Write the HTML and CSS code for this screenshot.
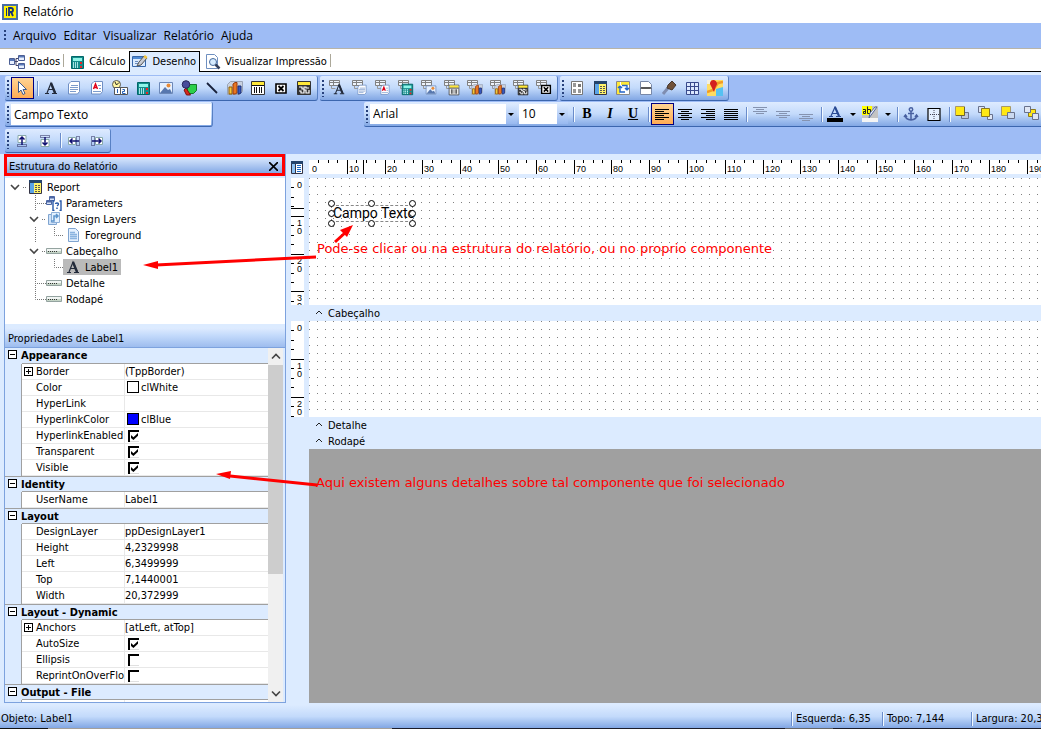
FILE: index.html
```html
<!DOCTYPE html>
<html lang="pt-BR">
<head>
<meta charset="utf-8">
<title>Relatório</title>
<link rel="stylesheet" href="styles.css">
</head>
<body>
<svg class="sprite" aria-hidden="true">
  <symbol id="cursor" viewBox="0 0 16 16"><path d="M4.500 1.500v11l2.500-2.500 2 4.500 2-1-2-4h3.500z" fill="#fff" stroke="#3c5a8c"/></symbol>
  <symbol id="text" viewBox="0 0 16 16"><path d="M2 13.500h4M9 13.500h5M4 13L8 3l4.500 10M5 9.500h5" fill="none" stroke="#222a3a" stroke-width="1.200"/><path d="M8 3l4 10" stroke="#222a3a" stroke-width="2.400"/></symbol>
  <symbol id="memo" viewBox="0 0 16 16"><path d="M5 1.500h8.500v10l-2 2.500H2.500V4z" fill="#fff" stroke="#6f8fc4"/><path d="M5 5.500h7M4 7.500h8M4 9.500h8M4 11.500h6" stroke="#7d9ccc"/></symbol>
  <symbol id="rich" viewBox="0 0 16 16"><path d="M5 1.500h8.500v10l-2 2.500H2.500V4z" fill="#fff" stroke="#6f8fc4"/><path d="M4.500 9L6.500 4l2 5M5 7.500h3" fill="none" stroke="#e00018" stroke-width="1.400"/><path d="M9 5.500h3M10 8.500h2M4 11.500h8" stroke="#7d9ccc"/></symbol>
  <symbol id="sysvar" viewBox="0 0 16 16"><circle cx="4.500" cy="4.500" r="4" fill="#fff6a0" stroke="#555"/><path d="M3 2l1.500 3L7 2.500" fill="none" stroke="#222"/><path d="M2.500 7.500h6v7h-6zM8.500 7.500h7v7h-7z" fill="#fff" stroke="#555"/><path d="M5.500 9v4M10.500 9.500h2v2h-2v2h3" fill="none" stroke="#2460b8"/></symbol>
  <symbol id="calc" viewBox="0 0 16 16"><path d="M2.500 2.500h12v12h-12z" fill="#168c8c" stroke="#006868"/><path d="M4 4h9v3H4z" fill="#8ff5e8"/><path d="M4 9h6M4 11h6M4 13h6" stroke="#d8ffff" stroke-dasharray="1 1" stroke-width="1.500"/><path d="M11 9h2M11 13h2" stroke="#e22" stroke-width="2"/></symbol>
  <symbol id="image" viewBox="0 0 16 16"><path d="M1.500 2.500h13v11h-13z" fill="#e6f1ff" stroke="#6c88b8"/><circle cx="10.500" cy="5.500" r="2" fill="#e88b38"/><path d="M2 13l5-6 3 3 2-1 2 4z" fill="#5777ae"/></symbol>
  <symbol id="shape" viewBox="0 0 16 16"><path d="M6.500 4.500h9v6l-3 3h-6z" fill="#2bd04b" stroke="#14772b"/><path d="M5 8l4.500 7h-4L3 10z" fill="#d7281c" stroke="#7d130c"/><circle cx="5" cy="4.500" r="3.800" fill="#474c9b" stroke="#28285c"/></symbol>
  <symbol id="line" viewBox="0 0 16 16"><path d="M3 3l10 10" stroke="#18203a" stroke-width="1.800"/></symbol>
  <symbol id="chart" viewBox="0 0 16 16"><path d="M.5 4.500l3-3h12v10l-3 3H.5z" fill="#c9d2e0" stroke="#99a3b5"/><path d="M2 7h3v7H2z" fill="#f6c63a" stroke="#8c5c08"/><path d="M6 4l2-1.500h2V13l-2 1H6z" fill="#e87722" stroke="#9a3a08"/><path d="M11 6h3v7l-2 1h-1z" fill="#3658c0" stroke="#1b2e74"/></symbol>
  <symbol id="barcode" viewBox="0 0 16 16"><path d="M1.500 1.500h13v13h-13z" fill="#fff" stroke="#333"/><path d="M2 2h12v3H2z" fill="#ffe838"/><path d="M2 5.500h12M4.500 7v6M6.500 7v6M9.500 7v6M11.500 7v6" stroke="#111"/></symbol>
  <symbol id="check" viewBox="0 0 16 16"><path d="M3 4h10v9H3z" fill="#fff" stroke="#000" stroke-width="1.600"/><path d="M5.500 6l5 5M10.500 6l-5 5" stroke="#000" stroke-width="1.800"/></symbol>
  <symbol id="barcode2d" viewBox="0 0 16 16"><path d="M1.500 1.500h13v13h-13z" fill="#333" stroke="#333"/><path d="M2 2h12v3H2z" fill="#ffe838"/><path d="M3 7h3v2h2V7h2v1h3M3 11h2v2h3v-3h2v3h3v-3" fill="none" stroke="#fff" stroke-width="1.200"/></symbol>
  <symbol id="dbgrid" viewBox="0 0 16 16"><path d="M.5 .5h10v5H.5zM.5 2.500h10M4.500.5v5" fill="#eef4fc" stroke="#808080"/><path d="M2.500 5.500v3h4" fill="none" stroke="#999"/></symbol>
  <symbol id="region" viewBox="0 0 16 16"><path d="M2.500 1.500h11v13h-11z" fill="#fff" stroke="#777"/><path d="M4 4h3M4 6h3M4 10h3M4 12h3M9 10h3M9 12h3" stroke="#333" stroke-width="1.200"/><path d="M9 4h3v3H9z" fill="#777"/></symbol>
  <symbol id="report" viewBox="0 0 16 16"><path d="M2.500 1.500h12v13h-12z" fill="#fff" stroke="#334"/><path d="M2 1h13v3H2z" fill="#24446c"/><path d="M3 4h4v10H3z" fill="#5ba4e8"/><path d="M7 4h7v10H7z" fill="#fff36a"/><path d="M8 6.500h2M8 8.500h2M8 10.500h2M8 12.500h2M11 6.500h2M11 8.500h2M11 10.500h2M11 12.500h2" stroke="#555"/></symbol>
  <symbol id="crosstab" viewBox="0 0 16 16"><path d="M1.500 1.500h13v13h-13z" fill="#fff" stroke="#888"/><path d="M2 2h3v12H2zM6 2h8v3H6z" fill="#ffe838"/><path d="M7 5.500h5v5M12 10l-2-2M12 10l2-2M5 7v5h5M5 6L3 8M5 6l2 2" fill="none" stroke="#2464c8" stroke-width="1.400"/></symbol>
  <symbol id="pagebreak" viewBox="0 0 16 16"><path d="M2.500 1.500h8l3 3v10h-11z" fill="#fff" stroke="#7888a8"/><path d="M3 9l1-2 1 2 1-2 1 2 1-2 1 2 1-2 1 2 1-2 1 2" fill="none" stroke="#333"/></symbol>
  <symbol id="brush" viewBox="0 0 16 16"><path d="M7 8L2 14" stroke="#7f8db0" stroke-width="3"/><path d="M7 5l4-4 4 4-4 5-5-2z" fill="#70523a" stroke="#47392f"/></symbol>
  <symbol id="table" viewBox="0 0 16 16"><path d="M2.500 2.500h12v12h-12zM2.500 6.500h12M2.500 10.500h12M6.500 2.500v12M10.500 2.500v12" fill="#dbe8ff" stroke="#394a8c"/></symbol>
  <symbol id="map" viewBox="0 0 16 16"><path d="M0 0h16v16H0z" fill="#ffdc61"/><path d="M9 16V9l7-2v9z" fill="#55c1f2"/><path d="M0 12l6-2 5-7 5-1" stroke="#f39b25" stroke-width="2.500" fill="none"/><path d="M0 0h4v4H0z" fill="#f4f1df"/><path d="M3 4a3.500 3.500 0 1 1 6 2L7 12 4 6z" fill="#d3201f"/></symbol>
  <symbol id="al" viewBox="0 0 16 16"><path d="M1 3.500h14M1 5.500h9M1 7.500h14M1 9.500h9M1 11.500h14M1 13.500h9" stroke="#000"/></symbol>
  <symbol id="ac" viewBox="0 0 16 16"><path d="M1 3.500h14M4 5.500h8M1 7.500h14M4 9.500h8M1 11.500h14M4 13.500h8" stroke="#000"/></symbol>
  <symbol id="ar" viewBox="0 0 16 16"><path d="M1 3.500h14M6 5.500h9M1 7.500h14M6 9.500h9M1 11.500h14M6 13.500h9" stroke="#000"/></symbol>
  <symbol id="aj" viewBox="0 0 16 16"><path d="M1 3.500h14M1 5.500h14M1 7.500h14M1 9.500h14M1 11.500h14M1 13.500h14" stroke="#000"/></symbol>
  <symbol id="vt" viewBox="0 0 16 16"><path d="M1 1.500h14M4 3.500h8M1 5.500h14M4 7.500h8" stroke="#8593b0"/></symbol>
  <symbol id="vm" viewBox="0 0 16 16"><path d="M1 5.500h14M4 7.500h8M1 9.500h14M4 11.500h8" stroke="#8593b0"/></symbol>
  <symbol id="vb" viewBox="0 0 16 16"><path d="M1 8.500h14M4 10.500h8M1 12.500h14M4 14.500h8" stroke="#8593b0"/></symbol>
  <symbol id="fontcolor" viewBox="0 0 16 16"><path d="M2 10.500h4M9 10.500h5M4 10L8 1l4 9M5 7.500h5" fill="none" stroke="#2a4a94" stroke-width="1.200"/><path d="M8 1l4 9" stroke="#2a4a94" stroke-width="2"/><path d="M0 12h16v4H0z"/></symbol>
  <symbol id="highlight" viewBox="0 0 16 16"><path d="M0 0h16v12H0z" fill="#c3c3c3"/><path d="M0 0h10v9H0z" fill="#ff0"/><path d="M0 12h16v4H0z" fill="#f4f4f4"/><path d="M1 3.500h2.500v4H1.500v-2h2M5.500.5v7h3v-4h-3" fill="none" stroke="#222"/><path d="M15 1L7 12l1-5 5-6z" fill="#eef" stroke="#536a9b"/></symbol>
  <symbol id="anchor" viewBox="0 0 16 16"><circle cx="8" cy="3.500" r="1.700" fill="none" stroke="#4860a0" stroke-width="1.500"/><path d="M8 5v9M5 7.500h6M2.500 9.500q0 4 5.500 4.500 5.500-.5 5.500-4.500M1 11l1.500-2L4 11M12 11l1.500-2L15 11" fill="none" stroke="#4860a0" stroke-width="1.500"/></symbol>
  <symbol id="border" viewBox="0 0 16 16"><path d="M2 2.500h12v12H2z" fill="#e3efff" stroke="#000" stroke-width="1.200"/><path d="M8 4v10M4 8.500h9" stroke="#445" stroke-dasharray="1 1"/></symbol>
  <symbol id="front" viewBox="0 0 16 16"><path d="M6.500 6.500h7v6h-7z" fill="#bcc6dc" stroke="#68718c"/><path d="M.5 .5h9v9h-9z" fill="#ffe814" stroke="#a89868"/><path d="M1 9.500h8.500V1" fill="none" stroke="#6d6230"/></symbol>
  <symbol id="forward" viewBox="0 0 16 16"><path d="M.5 .5h6v6h-6zM9.500 8.500h5v5h-5z" fill="#dfe6f4" stroke="#68718c"/><path d="M3.500 2.500h8v8h-8z" fill="#ffe814" stroke="#8c7820"/></symbol>
  <symbol id="back" viewBox="0 0 16 16"><path d="M.5 .5h9v9h-9z" fill="#ffe814" stroke="#a89868"/><path d="M6.500 6.500h7v6h-7z" fill="#cbd9f0" stroke="#68718c"/></symbol>
  <symbol id="backward" viewBox="0 0 16 16"><path d="M4.500 3.500h7v7h-7z" fill="#ffe814" stroke="#8c7820"/><path d="M.5 .5h6v6h-6zM8.500 7.500h6v6h-6z" fill="#dfe6f4" stroke="#68718c"/></symbol>
  <symbol id="up" viewBox="0 0 16 16"><path d="M4 2.500h8v7H4z" fill="#fff" stroke="#8aa"/><path d="M3.500 11.500h9v2h-9z" fill="none" stroke="#225" stroke-dasharray="1 1"/><path d="M8 4v8M5.500 6.500L8 4l2.500 2.500" fill="none" stroke="#101070" stroke-width="1.500"/></symbol>
  <symbol id="down" viewBox="0 0 16 16"><path d="M4 6.500h8v7H4z" fill="#fff" stroke="#8aa"/><path d="M3.500 2.500h9v2h-9z" fill="none" stroke="#225" stroke-dasharray="1 1"/><path d="M8 4v8M5.500 9.500L8 12l2.500-2.500" fill="none" stroke="#101070" stroke-width="1.500"/></symbol>
  <symbol id="left" viewBox="0 0 16 16"><path d="M2.500 4.500h7v7h-7z" fill="#fff" stroke="#8aa"/><path d="M10.500 3.500h3v9h-3z" fill="none" stroke="#225" stroke-dasharray="1 1"/><path d="M4 8h9M6.500 5.500L4 8l2.500 2.500" fill="none" stroke="#101070" stroke-width="1.500"/></symbol>
  <symbol id="right" viewBox="0 0 16 16"><path d="M6.500 4.500h7v7h-7z" fill="#fff" stroke="#8aa"/><path d="M2.500 3.500h3v9h-3z" fill="none" stroke="#225" stroke-dasharray="1 1"/><path d="M3 8h9M9.500 5.500L12 8l-2.500 2.500" fill="none" stroke="#101070" stroke-width="1.500"/></symbol>
  <symbol id="data" viewBox="0 0 16 16"><path d="M5 7.500h4M9 4.500H7v7h2" fill="none" stroke="#446"/><path d="M.5 4.500h5v6h-5zM9.500 1.500h6v5h-6zM9.500 9.500h6v5h-6z" fill="#e8f0ff" stroke="#4c5f94"/><path d="M1 5h4v2H1zM10 2h5v1.500h-5zM10 10h5v1.500h-5z" fill="#5878b8"/></symbol>
  <symbol id="design" viewBox="0 0 16 16"><path d="M.5 2.500h13v10H.5z" fill="#dcecff" stroke="#3767aa"/><path d="M1 3h12v2H1z" fill="#4f8ad4"/><path d="M3 9.500h5M3 7.500h3" stroke="#6a8cc0"/><path d="M12 2l3 2-6 7-4 1 2-4z" fill="#c9ccd2" stroke="#555"/><path d="M13 1l2.500 2-1.500 2-2.500-2z" fill="#f4c53c"/></symbol>
  <symbol id="preview" viewBox="0 0 16 16"><path d="M1.500.5h8l3 3v11h-11z" fill="#fff" stroke="#6e8fc0"/><circle cx="8" cy="8" r="3.500" fill="#d5ebff" stroke="#456a9c"/><path d="M10.500 10.500l4 4" stroke="#33405c" stroke-width="2.500"/></symbol>
  <symbol id="params" viewBox="0 0 16 16"><path d="M3.500 1.500h5v4h-5zM.5 5.500h5v4h-5z" fill="#d8e4f8" stroke="#4c66a4"/><path d="M4 2h4v1.500H4zM1 6h4v1.500H1z" fill="#4c66a4"/><path d="M8.500 6H7v9.500h1.500M13.500 6H15v9.500h-1.500M9.500 9q0-1 1.500-1t1.500 1-1.500 2M11 12.500V14" fill="none" stroke="#2456a8" stroke-width="1.400"/></symbol>
  <symbol id="layers" viewBox="0 0 16 16"><path d="M2.500 3.500h8v10h-8z" fill="#cfe2f8" stroke="#7fa4d0"/><path d="M5.500 1.500h8v10h-8z" fill="#e4f1ff" stroke="#8fb0d8"/><path d="M5 10h3V5h4M10 3l2 2-2 2" fill="none" stroke="#5c94cc" stroke-width="1.500"/></symbol>
  <symbol id="layer" viewBox="0 0 16 16"><path d="M3.500 1.500h7l3 3v10h-10z" fill="#e4f1ff" stroke="#7fa4d0"/><path d="M5 5.500h5M5 7.500h7M5 9.500h7M5 11.500h7" stroke="#8ab4e0" stroke-width="1.400"/></symbol>
  <symbol id="band" viewBox="0 0 16 16"><path d="M.5 5.500h15v5H.5z" fill="#c4d4c6" stroke="#94a3a0"/><path d="M1 6h14v2H1z" fill="#f1f5f3"/><path d="M2 8.500h9" stroke="#333" stroke-dasharray="1 1"/></symbol>
  <symbol id="gear" viewBox="2 0 16 16"><path d="M2.500 1.500h11v12h-11z" fill="#fff" stroke="#334"/><path d="M2 1h12v3H2z" fill="#24446c"/><path d="M3 4h3v9H3z" fill="#8cc2f4"/><path d="M6.500 4v9" stroke="#334"/><path d="M8 5.500h4M8 7.500h4M8 9.500h4M8 11.500h4" stroke="#1868c8"/></symbol>
  <symbol id="chev" viewBox="0 0 10 10"><path d="M1 3l4 4 4-4" fill="none" stroke="#444" stroke-width="1.600"/></symbol>
</svg>

<div class="window">
  <header class="titlebar">
    <svg width="16" height="16" viewBox="0 0 16 16"><path d="M0 0h16v16H0z" fill="#4a6ea5"/><path d="M2 2h12v12H2z" fill="#fff200"/><path d="M7 12V4h2q2 0 2 2t-2 2H8M9 8l2 4" fill="none" stroke="#10307c" stroke-width="1.800"/><path d="M4.500 4v8" stroke="#10307c"/></svg>
    <span>Relatório</span>
  </header>

  <nav class="menubar">
    <i class="grip"></i>
    <button>Arquivo</button><button>Editar</button><button>Visualizar</button><button>Relatório</button><button>Ajuda</button>
  </nav>

  <div class="tabs" role="tablist">
    <button role="tab" class="tab"><svg class="ic"><use href="#data"/></svg>Dados</button>
    <button role="tab" class="tab"><svg class="ic"><use href="#calc"/></svg>Cálculo</button>
    <button role="tab" class="tab active" aria-selected="true"><svg class="ic"><use href="#design"/></svg>Desenho</button>
    <button role="tab" class="tab"><svg class="ic"><use href="#preview"/></svg>Visualizar Impressão</button>
  </div>

  <div class="dock">
    <div class="dock-row">
      <div class="toolbar">
        <i class="grip"></i>
        <button class="tool on" aria-label="Selecionar"><svg class="ic"><use href="#cursor"/></svg></button>
        <i class="sep"></i>
        <button class="tool" aria-label="Texto"><svg class="ic"><use href="#text"/></svg></button>
        <button class="tool" aria-label="Memo"><svg class="ic"><use href="#memo"/></svg></button>
        <button class="tool" aria-label="Texto rico"><svg class="ic"><use href="#rich"/></svg></button>
        <button class="tool" aria-label="Variável de sistema"><svg class="ic"><use href="#sysvar"/></svg></button>
        <button class="tool" aria-label="Variável"><svg class="ic"><use href="#calc"/></svg></button>
        <button class="tool" aria-label="Imagem"><svg class="ic"><use href="#image"/></svg></button>
        <button class="tool" aria-label="Forma"><svg class="ic"><use href="#shape"/></svg></button>
        <button class="tool" aria-label="Linha"><svg class="ic"><use href="#line"/></svg></button>
        <button class="tool" aria-label="Gráfico"><svg class="ic"><use href="#chart"/></svg></button>
        <button class="tool" aria-label="Código de barras"><svg class="ic"><use href="#barcode"/></svg></button>
        <button class="tool" aria-label="Caixa de seleção"><svg class="ic"><use href="#check"/></svg></button>
        <button class="tool" aria-label="Código 2D"><svg class="ic"><use href="#barcode2d"/></svg></button>
      </div>
      <div class="toolbar">
        <i class="grip"></i>
        <button class="tool" aria-label="DB Texto"><svg class="ic"><use href="#dbgrid"/><use href="#text" x="3" y="2" width="14" height="14"/></svg></button>
        <button class="tool" aria-label="DB Memo"><svg class="ic"><use href="#dbgrid"/><use href="#memo" x="4" y="4" width="12" height="12"/></svg></button>
        <button class="tool" aria-label="DB Texto rico"><svg class="ic"><use href="#dbgrid"/><use href="#rich" x="4" y="4" width="12" height="12"/></svg></button>
        <button class="tool" aria-label="DB Cálculo"><svg class="ic"><use href="#dbgrid"/><use href="#calc" x="2" y="2" width="14" height="14"/></svg></button>
        <button class="tool" aria-label="DB Imagem"><svg class="ic"><use href="#dbgrid"/><use href="#image" x="4" y="4" width="12" height="12"/></svg></button>
        <button class="tool" aria-label="DB Código de barras"><svg class="ic"><use href="#dbgrid"/><use href="#barcode" x="4" y="4" width="12" height="12"/></svg></button>
        <button class="tool" aria-label="DB Gráfico"><svg class="ic"><use href="#dbgrid"/><use href="#chart" x="4" y="3" width="12" height="13"/></svg></button>
        <button class="tool" aria-label="DB Tee Chart"><svg class="ic"><use href="#dbgrid"/><use href="#chart" x="4" y="3" width="12" height="13"/></svg></button>
        <button class="tool" aria-label="DB Código 2D"><svg class="ic"><use href="#dbgrid"/><use href="#barcode2d" x="4" y="4" width="12" height="12"/></svg></button>
        <button class="tool" aria-label="DB Caixa de seleção"><svg class="ic"><use href="#dbgrid"/><use href="#check" x="3" y="2" width="14" height="14"/></svg></button>
      </div>
      <div class="toolbar">
        <i class="grip"></i>
        <button class="tool" aria-label="Região"><svg class="ic"><use href="#region"/></svg></button>
        <button class="tool" aria-label="Sub-relatório"><svg class="ic"><use href="#report"/></svg></button>
        <button class="tool" aria-label="Tabela cruzada"><svg class="ic"><use href="#crosstab"/></svg></button>
        <button class="tool" aria-label="Quebra de página"><svg class="ic"><use href="#pagebreak"/></svg></button>
        <button class="tool" aria-label="Pincel"><svg class="ic"><use href="#brush"/></svg></button>
        <button class="tool" aria-label="Grade"><svg class="ic"><use href="#table"/></svg></button>
        <button class="tool" aria-label="Mapa"><svg class="ic"><use href="#map"/></svg></button>
      </div>
    </div>
    <div class="dock-row spread">
      <div class="toolbar edit-bar">
        <i class="grip"></i>
        <input class="caption" type="text" value="Campo Texto" aria-label="Texto do componente">
      </div>
      <div class="toolbar format-bar">
        <i class="grip"></i>
        <span class="combo font"><select aria-label="Fonte"><option>Arial</option></select></span>
        <span class="combo size"><select aria-label="Tamanho"><option>10</option></select></span>
        <i class="sep"></i>
        <button class="tool glyph bold">B</button>
        <button class="tool glyph italic">I</button>
        <button class="tool glyph under">U</button>
        <i class="sep"></i>
        <button class="tool on" aria-label="Esquerda"><svg class="ic"><use href="#al"/></svg></button>
        <button class="tool" aria-label="Centro"><svg class="ic"><use href="#ac"/></svg></button>
        <button class="tool" aria-label="Direita"><svg class="ic"><use href="#ar"/></svg></button>
        <button class="tool" aria-label="Justificado"><svg class="ic"><use href="#aj"/></svg></button>
        <i class="sep"></i>
        <button class="tool" aria-label="Acima"><svg class="ic"><use href="#vt"/></svg></button>
        <button class="tool" aria-label="Meio"><svg class="ic"><use href="#vm"/></svg></button>
        <button class="tool" aria-label="Abaixo"><svg class="ic"><use href="#vb"/></svg></button>
        <i class="sep"></i>
        <button class="tool" aria-label="Cor da fonte"><svg class="ic"><use href="#fontcolor"/></svg></button>
        <button class="drop" aria-label="Cores da fonte"></button>
        <button class="tool" aria-label="Realce"><svg class="ic"><use href="#highlight"/></svg></button>
        <button class="drop" aria-label="Cores de realce"></button>
        <i class="sep"></i>
        <button class="tool" aria-label="Âncora"><svg class="ic"><use href="#anchor"/></svg></button>
        <button class="tool" aria-label="Borda"><svg class="ic"><use href="#border"/></svg></button>
        <i class="sep"></i>
        <button class="tool" aria-label="Trazer para frente"><svg class="ic"><use href="#front"/></svg></button>
        <button class="tool" aria-label="Avançar"><svg class="ic"><use href="#forward"/></svg></button>
        <button class="tool" aria-label="Enviar para trás"><svg class="ic"><use href="#back"/></svg></button>
        <button class="tool" aria-label="Recuar"><svg class="ic"><use href="#backward"/></svg></button>
      </div>
    </div>
    <div class="dock-row">
      <div class="toolbar nudge-bar">
        <i class="grip"></i>
        <button class="tool" aria-label="Mover acima"><svg class="ic"><use href="#up"/></svg></button>
        <button class="tool" aria-label="Mover abaixo"><svg class="ic"><use href="#down"/></svg></button>
        <i class="sep"></i>
        <button class="tool" aria-label="Mover à esquerda"><svg class="ic"><use href="#left"/></svg></button>
        <button class="tool" aria-label="Mover à direita"><svg class="ic"><use href="#right"/></svg></button>
      </div>
    </div>
  </div>

  <main class="work">
    <aside class="side">
      <div class="pane-title marked"><h2>Estrutura do Relatório</h2><button class="close" aria-label="Fechar"><svg width="9" height="9" viewBox="0 0 9 9"><path d="M0 0l9 9M9 0l-9 9" stroke="#000" stroke-width="1.600"/></svg></button></div>
      <ul class="tree">
        <li><svg class="twig" width="22" height="16"><use href="#chev" x="5" y="3" width="10" height="10"/><path d="M18 8.500h4"/></svg><svg class="ic"><use href="#report"/></svg><span>Report</span></li>
        <li><svg class="twig" width="41" height="16"><path d="M30.500 0v16M32 8.500h9"/></svg><svg class="ic"><use href="#params"/></svg><span>Parameters</span></li>
        <li><svg class="twig" width="41" height="16"><use href="#chev" x="24" y="3" width="10" height="10"/><path d="M37 8.500h4"/></svg><svg class="ic"><use href="#layers"/></svg><span>Design Layers</span></li>
        <li><svg class="twig" width="58" height="16"><path d="M30.500 0v16M49.500 0v8.500h9"/></svg><span class="node"><svg class="ic"><use href="#layer"/></svg><span>Foreground</span></span></li>
        <li><svg class="twig" width="41" height="16"><use href="#chev" x="24" y="3" width="10" height="10"/><path d="M37 8.500h4"/></svg><svg class="ic"><use href="#band"/></svg><span>Cabeçalho</span></li>
        <li><svg class="twig" width="58" height="16"><path d="M30.500 0v16M49.500 0v8.500h9"/></svg><span class="node picked"><svg class="ic"><use href="#text"/></svg><span>Label1</span></span></li>
        <li><svg class="twig" width="41" height="16"><path d="M30.500 0v16M32 8.500h9"/></svg><svg class="ic"><use href="#band"/></svg><span>Detalhe</span></li>
        <li><svg class="twig" width="41" height="16"><path d="M30.500 0v8.500h11"/></svg><svg class="ic"><use href="#band"/></svg><span>Rodapé</span></li>
      </ul>
      <div class="pane-title props-title"><h2>Propriedades de Label1</h2></div>
      <div class="props">
        <div class="props-view">
        <table class="grid">
          <colgroup><col class="c-gutter"><col class="c-name"><col class="c-value"></colgroup>
          <tr class="cat"><th colspan="3"><i class="box minus"></i>Appearance</th></tr>
          <tr><td></td><th><i class="box plus"></i>Border</th><td>(TppBorder)</td></tr>
          <tr><td></td><th>Color</th><td><i class="swatch white"></i>clWhite</td></tr>
          <tr><td></td><th>HyperLink</th><td></td></tr>
          <tr><td></td><th>HyperlinkColor</th><td><i class="swatch blue"></i>clBlue</td></tr>
          <tr><td></td><th><label for="p1">HyperlinkEnabled</label></th><td><input id="p1" type="checkbox" checked></td></tr>
          <tr><td></td><th><label for="p2">Transparent</label></th><td><input id="p2" type="checkbox" checked></td></tr>
          <tr><td></td><th><label for="p3">Visible</label></th><td><input id="p3" type="checkbox" checked></td></tr>
          <tr class="cat"><th colspan="3"><i class="box minus"></i>Identity</th></tr>
          <tr><td></td><th>UserName</th><td>Label1</td></tr>
          <tr class="cat"><th colspan="3"><i class="box minus"></i>Layout</th></tr>
          <tr><td></td><th>DesignLayer</th><td>ppDesignLayer1</td></tr>
          <tr><td></td><th>Height</th><td>4,2329998</td></tr>
          <tr><td></td><th>Left</th><td>6,3499999</td></tr>
          <tr><td></td><th>Top</th><td>7,1440001</td></tr>
          <tr><td></td><th>Width</th><td>20,372999</td></tr>
          <tr class="cat"><th colspan="3"><i class="box minus"></i>Layout - Dynamic</th></tr>
          <tr><td></td><th><i class="box plus"></i>Anchors</th><td>[atLeft, atTop]</td></tr>
          <tr><td></td><th><label for="p4">AutoSize</label></th><td><input id="p4" type="checkbox" checked></td></tr>
          <tr><td></td><th><label for="p5">Ellipsis</label></th><td><input id="p5" type="checkbox"></td></tr>
          <tr><td></td><th><label for="p6">ReprintOnOverFlo</label></th><td><input id="p6" type="checkbox"></td></tr>
          <tr class="cat"><th colspan="3"><i class="box minus"></i>Output - File</th></tr>
          <tr><td></td><th></th><td></td></tr>
        </table>
        </div>
        <div class="scroll">
          <svg class="arrow up" viewBox="0 0 10 10"><use href="#chev"/></svg>
          <i class="thumb"></i><i class="track"></i>
          <svg class="arrow" viewBox="0 0 10 10"><use href="#chev"/></svg>
        </div>
      </div>
    </aside>

    <section class="designer">
      <div class="ruler-line">
        <svg class="ic corner"><use href="#gear"/></svg>
        <svg class="hruler" id="hruler"></svg>
      </div>
      <div class="band-row first">
        <svg class="vruler" data-mark="30"></svg>
        <div class="paper">
          <div class="component">Campo Texto
            <i class="h tl"></i><i class="h tc"></i><i class="h tr"></i><i class="h ml"></i><i class="h mr"></i><i class="h bl"></i><i class="h bc"></i><i class="h br"></i>
          </div>
        </div>
      </div>
      <div class="band-name"><svg viewBox="0 0 8 8"><path d="M1 5l3-3 3 3"/></svg>Cabeçalho</div>
      <div class="band-row second">
        <svg class="vruler"></svg>
        <div class="paper"></div>
      </div>
      <div class="band-name"><svg viewBox="0 0 8 8"><path d="M1 5l3-3 3 3"/></svg>Detalhe</div>
      <div class="band-name"><svg viewBox="0 0 8 8"><path d="M1 5l3-3 3 3"/></svg>Rodapé</div>
      <div class="void"></div>
    </section>
  </main>

  <footer class="status">
    <span class="obj">Objeto: Label1</span>
    <span class="cell a">Esquerda: 6,35</span>
    <span class="cell b">Topo: 7,144</span>
    <span class="cell c">Largura: 20,3</span>
  </footer>
  <div class="taskbar"></div>

  <svg class="arrows" aria-hidden="true">
    <path d="M316 257L156 265" stroke-width="3"/><path class="head" d="M143 265l15-4v8z"/>
    <path d="M335 242l11-10" stroke-width="3"/><path class="head" d="M353 225l-6 12-7-7z"/>
    <path d="M317 485L230 476" stroke-width="3"/><path class="head" d="M216 474l15-3-1 8z"/>
  </svg>
  <p class="note one">Pode-se clicar ou na estrutura do relatório, ou no proprio componente</p>
  <p class="note two">Aqui existem alguns detalhes sobre tal componente que foi selecionado</p>
</div>
<script src="rulers.js"></script>
</body>
</html>
```

FILE: styles.css
```css
* { box-sizing: border-box; }

body {
  margin: 0;
  font: 11px/14px "DejaVu Sans Condensed", "Noto Sans", sans-serif;
  color: #000;
  overflow: hidden;
}

button, input, select {
  font: inherit;
  color: inherit;
  border: 0;
  padding: 0;
  margin: 0;
  background: none;
  border-radius: 0;
}

h2, p, ul { margin: 0; padding: 0; font-size: inherit; font-weight: normal; }

.sprite { position: absolute; width: 0; height: 0; }
.ic { width: 16px; height: 16px; flex: none; }

.window {
  position: relative;
  display: flex;
  flex-direction: column;
  height: 100vh;
  overflow: hidden;
  background: #dcebff;
}

.titlebar {
  display: flex;
  align-items: center;
  gap: 5px;
  height: 23px;
  flex: none;
  padding-left: 2px;
  background: #fff;
  font: 12px/16px "Open Sans", sans-serif;
}

.menubar {
  display: flex;
  align-items: center;
  gap: 7px;
  height: 25px;
  flex: none;
  padding-left: 2px;
  background: #9ebcf5;
  font: 12px/16px "Open Sans", sans-serif;
}
.menubar .grip { height: 12px; margin-right: 0; }

.grip {
  width: 2px;
  height: 17px;
  flex: none;
  margin: 0 2px;
  background: repeating-linear-gradient(#27417c 0 2px, transparent 2px 4px);
}

.tabs {
  display: flex;
  align-items: flex-end;
  height: 24px;
  flex: none;
  padding-left: 4px;
  background: #fff;
  border-top: 1px solid #b8b4a8;
  border-bottom: 1px solid #000;
}
.tab {
  display: flex;
  align-items: center;
  gap: 4px;
  height: 20px;
  padding: 1px 4px 0 5px;
  white-space: nowrap;
  position: relative;
}
.tab:not(.active)::after {
  content: "";
  position: absolute;
  right: 0;
  top: 3px;
  height: 13px;
  border-right: 1px solid #aca899;
}
.tab:nth-child(2)::after { display: none; }
.tab.active {
  margin-bottom: -1px;
  height: 21px;
  padding: 0 3px 0 2px;
  background: #dcebff;
  border: 1px solid #000;
  border-bottom: 0;
}

.dock {
  display: flex;
  flex-direction: column;
  gap: 1px;
  flex: none;
  padding: 1px 0 0 5px;
  height: 82px;
  background: #9ebcf5;
  border-top: 3px solid #dcebff;
}
.dock-row { display: flex; gap: 2px; flex: none; }
.toolbar {
  display: flex;
  align-items: center;
  flex: none;
  height: 25px;
  padding-right: 1px;
  background: linear-gradient(#deebff, #c3dafb 50%, #82a7e4);
  border-bottom: 1px solid #3c66ae;
  border-right: 1px solid #5880c4;
  border-radius: 2px 2px 3px 2px;
}
.spread { justify-content: space-between; }
.edit-bar { width: 208px; }
.format-bar { flex: 0 1 677px; overflow: hidden; border-right: 0; border-radius: 2px 0 0 2px; }
.format-bar > * { flex: none; }
.nudge-bar { height: 24px; margin-top: 1px; }

.tool {
  display: grid;
  place-items: center;
  width: 23px;
  height: 22px;
  padding-right: 1px;
  flex: none;
}
.tool.on {
  background: linear-gradient(#ffd594, #ffab54);
  border: 1px solid #000080;
}
.glyph { font: bold 14px/16px "Liberation Serif", serif; }
.italic { font-style: italic; }
.under { text-decoration: underline; }
.sep {
  width: 6px;
  height: 15px;
  flex: none;
  background: linear-gradient(90deg, transparent 3px, #6a8ccb 3px 4px, #f1f9ff 4px 5px, transparent 5px);
}
.caption {
  flex: 1;
  height: 21px;
  padding: 0 3px;
  background: #fff;
  font: 12px/16px "Open Sans", sans-serif;
}
.combo { position: relative; height: 20px; margin-right: 2px; background: #fff; }
.combo select {
  appearance: none;
  width: 100%;
  height: 20px;
  padding: 0 3px;
  font: 12px/16px "Open Sans", sans-serif;
}
.combo.font { width: 147px; }
.combo.size { width: 49px; }
.combo::before {
  content: "";
  position: absolute;
  right: 0;
  top: 0;
  width: 11px;
  height: 20px;
  background: linear-gradient(#dcebff, #98b9f0);
}
.combo select { position: relative; }
.combo::after, .drop::after {
  content: "";
  position: absolute;
  right: 3px;
  top: 9px;
  border: 3px solid transparent;
  border-top-color: #000;
  border-bottom: 0;
}
.drop { position: relative; width: 12px; height: 20px; }

.work { display: flex; flex: 1; min-height: 0; }

.side {
  display: flex;
  flex-direction: column;
  width: 282px;
  flex: none;
  margin: 0 0 2px 4px;
  border: 1px solid #7da2de;
  border-top: 0;
}
.pane-title {
  display: flex;
  align-items: center;
  justify-content: space-between;
  height: 20px;
  flex: none;
  padding: 2px 3px 0;
  background: linear-gradient(#deebff, #c3dafb 40%, #9dbcee);
  border-bottom: 1px solid #7da2de;
}
.marked {
  height: 22px;
  padding: 3px 4px 0 2px;
  margin: 0 0 2px -1px;
  background: linear-gradient(#dbe9fe, #84a9e6);
  border: 3px solid #f00;
}
.close { width: 9px; height: 9px; display: grid; }
.tree {
  height: 146px;
  flex: none;
  padding-top: 1px;
  list-style: none;
  background: #fff;
}
.tree li { display: flex; align-items: center; height: 16px; }
.tree li > span { padding-left: 4px; line-height: 16px; }
.tree .node { display: flex; align-items: center; height: 16px; padding: 0 3px 0 2px; }
.tree li > span:not(.node), .node span { padding-top: 1px; }
.node span { padding-left: 4px; }
.picked { background: #bababa; }
.twig { flex: none; fill: none; stroke: #777; stroke-dasharray: 1 1; }
.twig use { stroke-dasharray: none; }
.props-title { margin-top: 4px; }

.props { display: flex; flex: 1; min-height: 0; }
.props-view { flex: 1; overflow: hidden; }
.grid {
  width: 100%;
  table-layout: fixed;
  border-spacing: 0;
}
.c-gutter { width: 17px; }
.c-name { width: 103px; }
.grid tr { height: 16px; }
.grid td, .grid th {
  height: 16px;
  padding: 1px 0 0;
  font-weight: normal;
  text-align: left;
  line-height: 14px;
  white-space: nowrap;
  background: #fff;
  border-bottom: 1px solid #e8e8e8;
}
.grid td:first-child { background: #dcebff; border-bottom: 0; border-right: 1px solid #a0a0a0; }
.grid tr:not(.cat) th { padding-left: 14px; border-right: 1px solid #e8e8e8; position: relative; }
.grid .cat th {
  padding: 0 0 0 3px;
  font-weight: bold;
  background: #dcebff;
  border-bottom: 0;
}
.grid .cat + tr th, .grid .cat + tr td:last-child { box-shadow: 0 -1px #a0a0a0; }
.grid tr:not(:first-child).cat th { border-top: 1px solid #a0a0a0; }
.box {
  display: inline-block;
  width: 9px;
  height: 9px;
  border: 1px solid #000;
  background: linear-gradient(#000, #000) center / 5px 1px no-repeat #fff;
}
.minus { margin-right: 4px; }
.plus {
  position: absolute;
  left: 2px;
  top: 3px;
  background: linear-gradient(#000, #000) center / 5px 1px no-repeat, linear-gradient(#000, #000) center / 1px 5px no-repeat #fff;
}
.swatch {
  display: inline-block;
  width: 12px;
  height: 12px;
  margin: 0 2px;
  border: 1px solid #000;
  vertical-align: top;
}
.white { background: #fff; }
.blue { background: #00f; }
.grid input {
  appearance: none;
  display: block;
  position: relative;
  width: 11px;
  height: 12px;
  margin-left: 3px;
  border: 0;
  background:
    linear-gradient(#000, #000) 0 0 / 100% 2px no-repeat,
    linear-gradient(#000, #000) 0 0 / 2px 100% no-repeat,
    linear-gradient(#e0e0e0, #e0e0e0) 0 100% / 100% 1px no-repeat;
}
.grid input:checked::before {
  content: "";
  position: absolute;
  inset: 3px 1px 2px 3px;
  background: #000;
  clip-path: polygon(0 30%, 35% 60%, 100% 0, 100% 40%, 35% 100%, 0 70%);
}

.scroll { display: flex; flex-direction: column; align-items: center; width: 17px; background: #f0f0f0; border-right: 2px solid #dcebff; }
.arrow { width: 10px; height: 17px; flex: none; }
.arrow.up { transform: rotate(180deg); }
.thumb { flex: 208; width: 15px; background: #cdcdcd; }
.track { flex: 111; }

.designer {
  display: flex;
  flex-direction: column;
  flex: 1;
  min-width: 0;
  padding: 5px 0 2px 5px;
  border-top: 1px solid #dcebff;
}
.ruler-line { display: flex; height: 18px; flex: none; }
.corner { margin-right: 2px; }
.hruler { flex: 1; min-width: 0; height: 14px; background: #fff; }
.hruler text, .vruler text { font: 9px "Liberation Sans", sans-serif; }
.band-row { display: flex; gap: 5px; flex: none; }
.vruler { width: 13px; height: 100%; background: #fff; }
.first { height: 127px; }
.second { height: 96px; }
.paper {
  position: relative;
  flex: 1;
  background: linear-gradient(90deg, #fff 0 7px, transparent 7px) 1px 0 / 8px 8px, linear-gradient(#808080 0 1px, #fff 1px) 0 0 / 8px 8px;
}
.component {
  position: absolute;
  left: 22px;
  top: 27px;
  width: 82px;
  height: 17px;
  padding-left: 1px;
  border: 1px dashed #888;
  font: 14px/15px Roboto, sans-serif;
  white-space: nowrap;
}
.h {
  position: absolute;
  width: 7px;
  height: 7px;
  border: 1px solid #000;
  border-radius: 50%;
  background: #fff;
}
.tl, .tc, .tr { top: -6px; }
.ml, .mr { top: 4px; }
.bl, .bc, .br { top: 14px; }
.tl, .ml, .bl { left: -4px; }
.tc, .bc { left: 36px; }
.tr, .mr, .br { left: 77px; }

.band-name {
  display: flex;
  align-items: center;
  gap: 5px;
  height: 16px;
  flex: none;
  padding: 2px 0 0 24px;
}
.band-name svg { width: 8px; height: 8px; margin-bottom: 3px; fill: none; stroke: #222; }
.void { flex: 1; margin-left: 18px; background: #a0a0a0; }

.status {
  display: flex;
  align-items: center;
  height: 23px;
  flex: none;
  padding: 4px 0 0 1px;
  background: linear-gradient(#dcebff, #c3dafb 50%, #82a7e4);
  white-space: nowrap;
}
.status .obj { flex: 1; }
.cell { flex: none; padding-left: 4px; border-left: 1px solid #6a8ccb; box-shadow: inset 1px 0 #f1f9ff; }
.cell.a { width: 91px; }
.cell.b { width: 89px; }
.cell.c { width: 70px; }
.taskbar {
  height: 1px;
  flex: none;
  background: linear-gradient(90deg, #111 48px, #a39f9b 48px 392px, #1c1c28 392px 785px, #666 785px 833px, #1c1c28 833px);
}

.arrows { position: absolute; left: 0; top: 0; width: 100%; height: 100%; pointer-events: none; stroke: #f00; fill: none; }
.arrows .head { fill: #f00; stroke: none; }
.note {
  position: absolute;
  font: 13px/16px "DejaVu Sans", sans-serif;
  color: #f00;
  white-space: nowrap;
}
.one { left: 317px; top: 241px; }
.two { left: 316px; top: 475px; }
```

FILE: rulers.js
```js
// Rulers are graduated in millimetres at 96 dpi; a tick falls every 2.5 mm.
const NS = "http://www.w3.org/2000/svg";
const STEP = 9.45;

function add(svg, tag, attrs, text) {
  const el = document.createElementNS(NS, tag);
  for (const key in attrs) el.setAttribute(key, attrs[key]);
  if (text) el.textContent = text;
  svg.appendChild(el);
}

const h = document.getElementById("hruler");
const width = h.getBoundingClientRect().width;
add(h, "text", { x: 3, y: 12 }, "0");
for (let i = 1; i * STEP < width; i++) {
  const x = Math.round(i * STEP);
  const major = i % 4 === 0;
  add(h, "rect", { x, y: 0, width: 1, height: major ? 14 : 3 });
  if (major) add(h, "text", { x: x + 2, y: 12 }, String(i / 4 * 10));
}
add(h, "rect", { x: 54, y: 0, width: 1, height: 14 });

for (const v of document.querySelectorAll(".vruler")) {
  const height = v.getBoundingClientRect().height;
  add(v, "text", { x: 6, y: 10 }, "0");
  for (let i = 1; i * STEP < height; i++) {
    const y = Math.round(i * STEP);
    const major = i % 4 === 0;
    add(v, "rect", { x: 0, y, width: major ? 13 : 3, height: 1 });
    if (major) {
      String(i / 4 * 10).split("").forEach((d, n) => add(v, "text", { x: 6, y: y + 10 + n * 8 }, d));
    }
  }
  if (v.dataset.mark) add(v, "rect", { x: 0, y: v.dataset.mark, width: 13, height: 1 });
}
```
